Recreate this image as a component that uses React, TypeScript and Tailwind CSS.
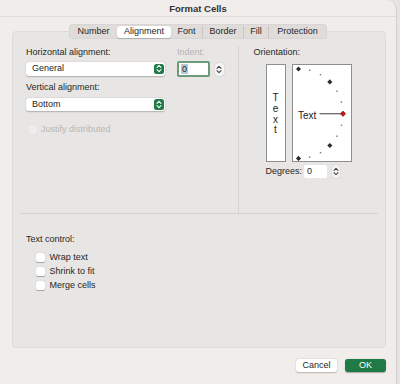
import React from "react";

const tabs = [
  { label: "Number", w: "w-[47px]" },
  { label: "Alignment", w: "w-[54px]", active: true },
  { label: "Font", w: "w-[32px]" },
  { label: "Border", w: "w-[41px]" },
  { label: "Fill", w: "w-[25px]" },
  { label: "Protection", w: "w-[57px]" },
];

function UpDown({ color = "#fff" }: { color?: string }) {
  return (
    <svg width="6" height="9" viewBox="0 0 6 9" fill="none">
      <path d="M1 3.4 L3 1.4 L5 3.4" stroke={color} strokeWidth="1.1" strokeLinecap="round" strokeLinejoin="round" />
      <path d="M1 5.6 L3 7.6 L5 5.6" stroke={color} strokeWidth="1.1" strokeLinecap="round" strokeLinejoin="round" />
    </svg>
  );
}

function Select({ value }: { value: string }) {
  return (
    <div className="flex h-[13.5px] w-[139px] items-center justify-between rounded-[3px] bg-white pl-[6px] pr-[1.5px] shadow-[0_0.5px_1.5px_rgba(0,0,0,0.25)]">
      <span>{value}</span>
      <span className="flex h-[10.5px] w-[10px] items-center justify-center rounded-[2.5px] bg-[#1f7a46]">
        <UpDown />
      </span>
    </div>
  );
}

function Stepper() {
  return (
    <span className="flex h-[13px] w-[8.5px] items-center justify-center rounded-[3px] bg-[#f6f5f4] shadow-[0_0_1px_rgba(0,0,0,0.35)]">
      <UpDown color="#444" />
    </span>
  );
}

function Checkbox({ label, disabled }: { label: string; disabled?: boolean }) {
  return (
    <div className={`flex items-center gap-[4.5px] ${disabled ? "text-[#b9b7b5]" : ""}`}>
      <span
        className={`h-[9px] w-[9px] rounded-[2px] ${
          disabled ? "bg-[#eeedec] shadow-[0_0_1px_rgba(0,0,0,0.15)]" : "bg-white shadow-[0_0.5px_1px_rgba(0,0,0,0.3)]"
        }`}
      />
      <span>{label}</span>
    </div>
  );
}

function ArcDial() {
  const cx = 5;
  const cy = 48.7;
  const r = 45;
  const small = [75, 60, 30, 15, -15, -30, -60, -75];
  const big = [90, 45, -45, -90];
  const pt = (a: number) => {
    const rad = (a * Math.PI) / 180;
    return [cx + r * Math.cos(rad), cy - r * Math.sin(rad)];
  };
  return (
    <svg width="60" height="97" viewBox="0 0 60 97">
      {small.map((a) => {
        const [x, y] = pt(a);
        return <rect key={a} x={x - 0.7} y={y - 0.7} width="1.4" height="1.4" fill="#777" />;
      })}
      {big.map((a) => {
        const [x, y] = pt(a);
        const px = a === 90 || a === -90 ? x + 0.5 : x;
        const py = a === 90 ? y + 0.3 : a === -90 ? y - 0.3 : y;
        return (
          <rect key={a} x={px - 1.8} y={py - 1.8} width="3.6" height="3.6" fill="#2b2b2b" transform={`rotate(45 ${px} ${py})`} />
        );
      })}
      <line x1="26.5" y1={cy} x2="48" y2={cy} stroke="#6b6b6b" strokeWidth="1.3" />
      <rect x={50 - 1.9} y={cy - 1.9} width="3.8" height="3.8" fill="#d21010" stroke="#3a1a1a" strokeWidth="0.5" transform={`rotate(45 50 ${cy})`} />
      <text x="5" y="54.3" fontSize="10" fill="#222" fontFamily="'Liberation Sans', Arial, sans-serif">
        Text
      </text>
    </svg>
  );
}

export default function App() {
  return (
    <div className="h-[384px] w-[400px] overflow-hidden bg-[#e6e4e2] font-['Liberation_Sans',Arial,sans-serif] text-[9px] leading-[11px] text-[#262626]">
      <div className="flex h-[384px] w-[397px] flex-col rounded-tr-[10px] border-r border-[#d2d0ce] bg-[#f0edeb]">
        <div className="flex h-[17px] items-center justify-center border-b border-[#dedbd9] text-[9.5px] font-bold text-[#333]">
          Format Cells
        </div>

        <div className="relative z-10 mt-[7px] flex h-[15px] justify-center">
          <div className="flex h-[15px] items-center rounded-[4px] bg-[#dfdcda] px-[1px] shadow-[inset_0_0_0_0.5px_rgba(0,0,0,0.06)]">
            {tabs.map((t, i) => {
              const next = tabs[i + 1];
              const sep = i > 1 && next && !next.active;
              return (
                <div
                  key={t.label}
                  className={`flex h-[12px] items-center justify-center ${t.w} ${
                    t.active ? "rounded-[3px] bg-white shadow-[0_0.5px_1px_rgba(0,0,0,0.2)]" : ""
                  } ${sep ? "border-r border-[#c9c6c4]" : ""}`}
                >
                  {t.label}
                </div>
              );
            })}
          </div>
        </div>

        <div className="-mt-[8px] ml-[12px] flex h-[317px] w-[374px] flex-col rounded-[4px] border border-[#dddbd9] bg-[#e7e6e4]">
          <div className="flex h-[181px]">
            <div className="w-[225px] pl-[13px] pt-[15px]">
              <div className="flex">
                <div className="w-[139px]">
                  <div>Horizontal alignment:</div>
                  <div className="mt-[4px]">
                    <Select value="General" />
                  </div>
                  <div className="mt-[6px]">Vertical alignment:</div>
                  <div className="mt-[5px]">
                    <Select value="Bottom" />
                  </div>
                </div>
                <div className="ml-[12px]">
                  <div className="text-[#b5b3b1]">Indent:</div>
                  <div className="mt-[3px] flex items-center">
                    <div className="flex h-[16px] w-[33px] items-center rounded-[2px] border-[2px] border-[#6a9c79] bg-white pl-[2px]">
                      <span className="bg-[#b4cad6] px-[1px] leading-[10px]">0</span>
                    </div>
                    <div className="ml-[5px]">
                      <Stepper />
                    </div>
                  </div>
                </div>
              </div>
              <div className="ml-[1.5px] mt-[13px]">
                <Checkbox label="Justify distributed" disabled />
              </div>
            </div>

            <div className="mt-[14px] w-px bg-[#d7d5d3]" />

            <div className="pl-[14.5px] pt-[15px]">
              <div>Orientation:</div>
              <div className="ml-[12px] mt-[6px] flex gap-[6px]">
                <div className="flex h-[98px] w-[20px] flex-col items-center justify-center border border-[#8f8f8f] bg-white pt-[3px] text-[10px] leading-[10.7px] text-[#222]">
                  <span>T</span>
                  <span>e</span>
                  <span>x</span>
                  <span>t</span>
                </div>
                <div className="h-[98px] w-[60px] border border-[#8f8f8f] bg-white">
                  <ArcDial />
                </div>
              </div>
              <div className="ml-[12px] mt-[3px] flex items-center">
                <span>Degrees:</span>
                <div className="ml-[2px] flex h-[13px] w-[23px] items-center rounded-[2px] bg-white pl-[3px]">0</div>
                <div className="ml-[4.5px]">
                  <Stepper />
                </div>
              </div>
            </div>
          </div>

          <div className="mx-[7px] h-px bg-[#d5d3d1]" />

          <div className="pl-[13px] pt-[20px]">
            <div>Text control:</div>
            <div className="ml-[10px] mt-[5px] flex flex-col">
              {["Wrap text", "Shrink to fit", "Merge cells"].map((l) => (
                <div key={l} className="flex h-[14.3px] items-center">
                  <Checkbox label={l} />
                </div>
              ))}
            </div>
          </div>
        </div>

        <div className="mt-[11px] flex justify-end gap-[8px] pr-[10px]">
          <div className="flex h-[13px] w-[41px] items-center justify-center rounded-[3px] bg-white shadow-[0_0.5px_1.5px_rgba(0,0,0,0.25)]">
            Cancel
          </div>
          <div className="flex h-[13px] w-[41px] items-center justify-center rounded-[3px] bg-[#1f7a46] text-white shadow-[0_0.5px_1px_rgba(0,0,0,0.3)]">
            OK
          </div>
        </div>
      </div>
    </div>
  );
}
